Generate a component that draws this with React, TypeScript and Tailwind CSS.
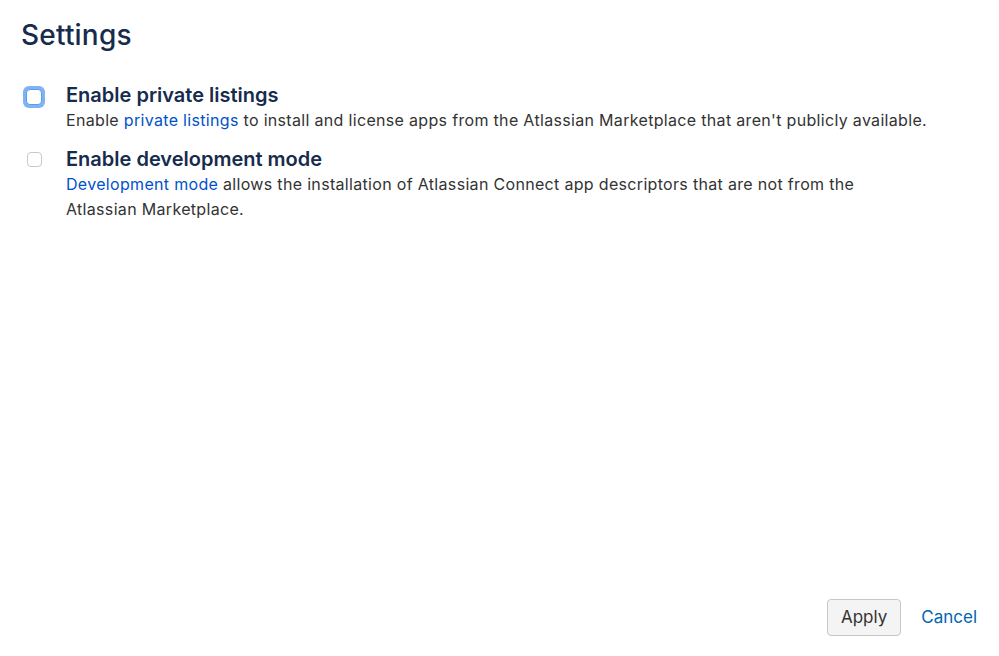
export default function App() {
  return (
    <div className="w-[999px] h-[656px] bg-white flex flex-col font-['Inter','Liberation_Sans',sans-serif] text-[#333333]">
      <div className="flex-1 px-[21px] pt-[18px]">
        <h1 className="text-[28px] leading-[34px] font-medium text-[#172b4d] tracking-[0.2px]">Settings</h1>
        <div className="mt-[31px] flex flex-col gap-[15px]">
          <div className="flex">
            <div className="w-[45px] flex justify-start pt-[3px] pl-[2px]">
              <div className="w-[22px] h-[22px] rounded-[6px] bg-[#7fb3f5] flex items-center justify-center">
                <div className="w-[16px] h-[16px] rounded-[4px] bg-white border border-[#5e9ce8]" />
              </div>
            </div>
            <div>
              <div className="text-[20px] leading-[25px] font-semibold text-[#172b4d]">Enable private listings</div>
              <p className="text-[16px] leading-[24px] tracking-[0.32px]">
                Enable <a className="text-[#0052cc]" href="#">private listings</a> to install and license apps from the Atlassian Marketplace that aren't publicly available.
              </p>
            </div>
          </div>
          <div className="flex">
            <div className="w-[45px] flex justify-start pt-[5px] pl-[6px]">
              <div className="w-[15px] h-[15px] rounded-[4px] bg-white border border-[#c9c9c9]" />
            </div>
            <div className="w-[860px]">
              <div className="text-[20px] leading-[25px] font-semibold text-[#172b4d]">Enable development mode</div>
              <p className="text-[16px] leading-[25px] tracking-[0.32px]">
                <a className="text-[#0052cc]" href="#">Development mode</a> allows the installation of Atlassian Connect app descriptors that are not from the Atlassian Marketplace.
              </p>
            </div>
          </div>
        </div>
      </div>
      <div className="flex justify-end items-center gap-[20px] pr-[22px] pb-[20px]">
        <button className="h-[37px] px-[13px] rounded-[4px] border border-[#c7c7c7] bg-[#f4f4f4] text-[17px] text-[#333333]">Apply</button>
        <a className="text-[17px] text-[#0065b3]" href="#">Cancel</a>
      </div>
    </div>
  );
}
